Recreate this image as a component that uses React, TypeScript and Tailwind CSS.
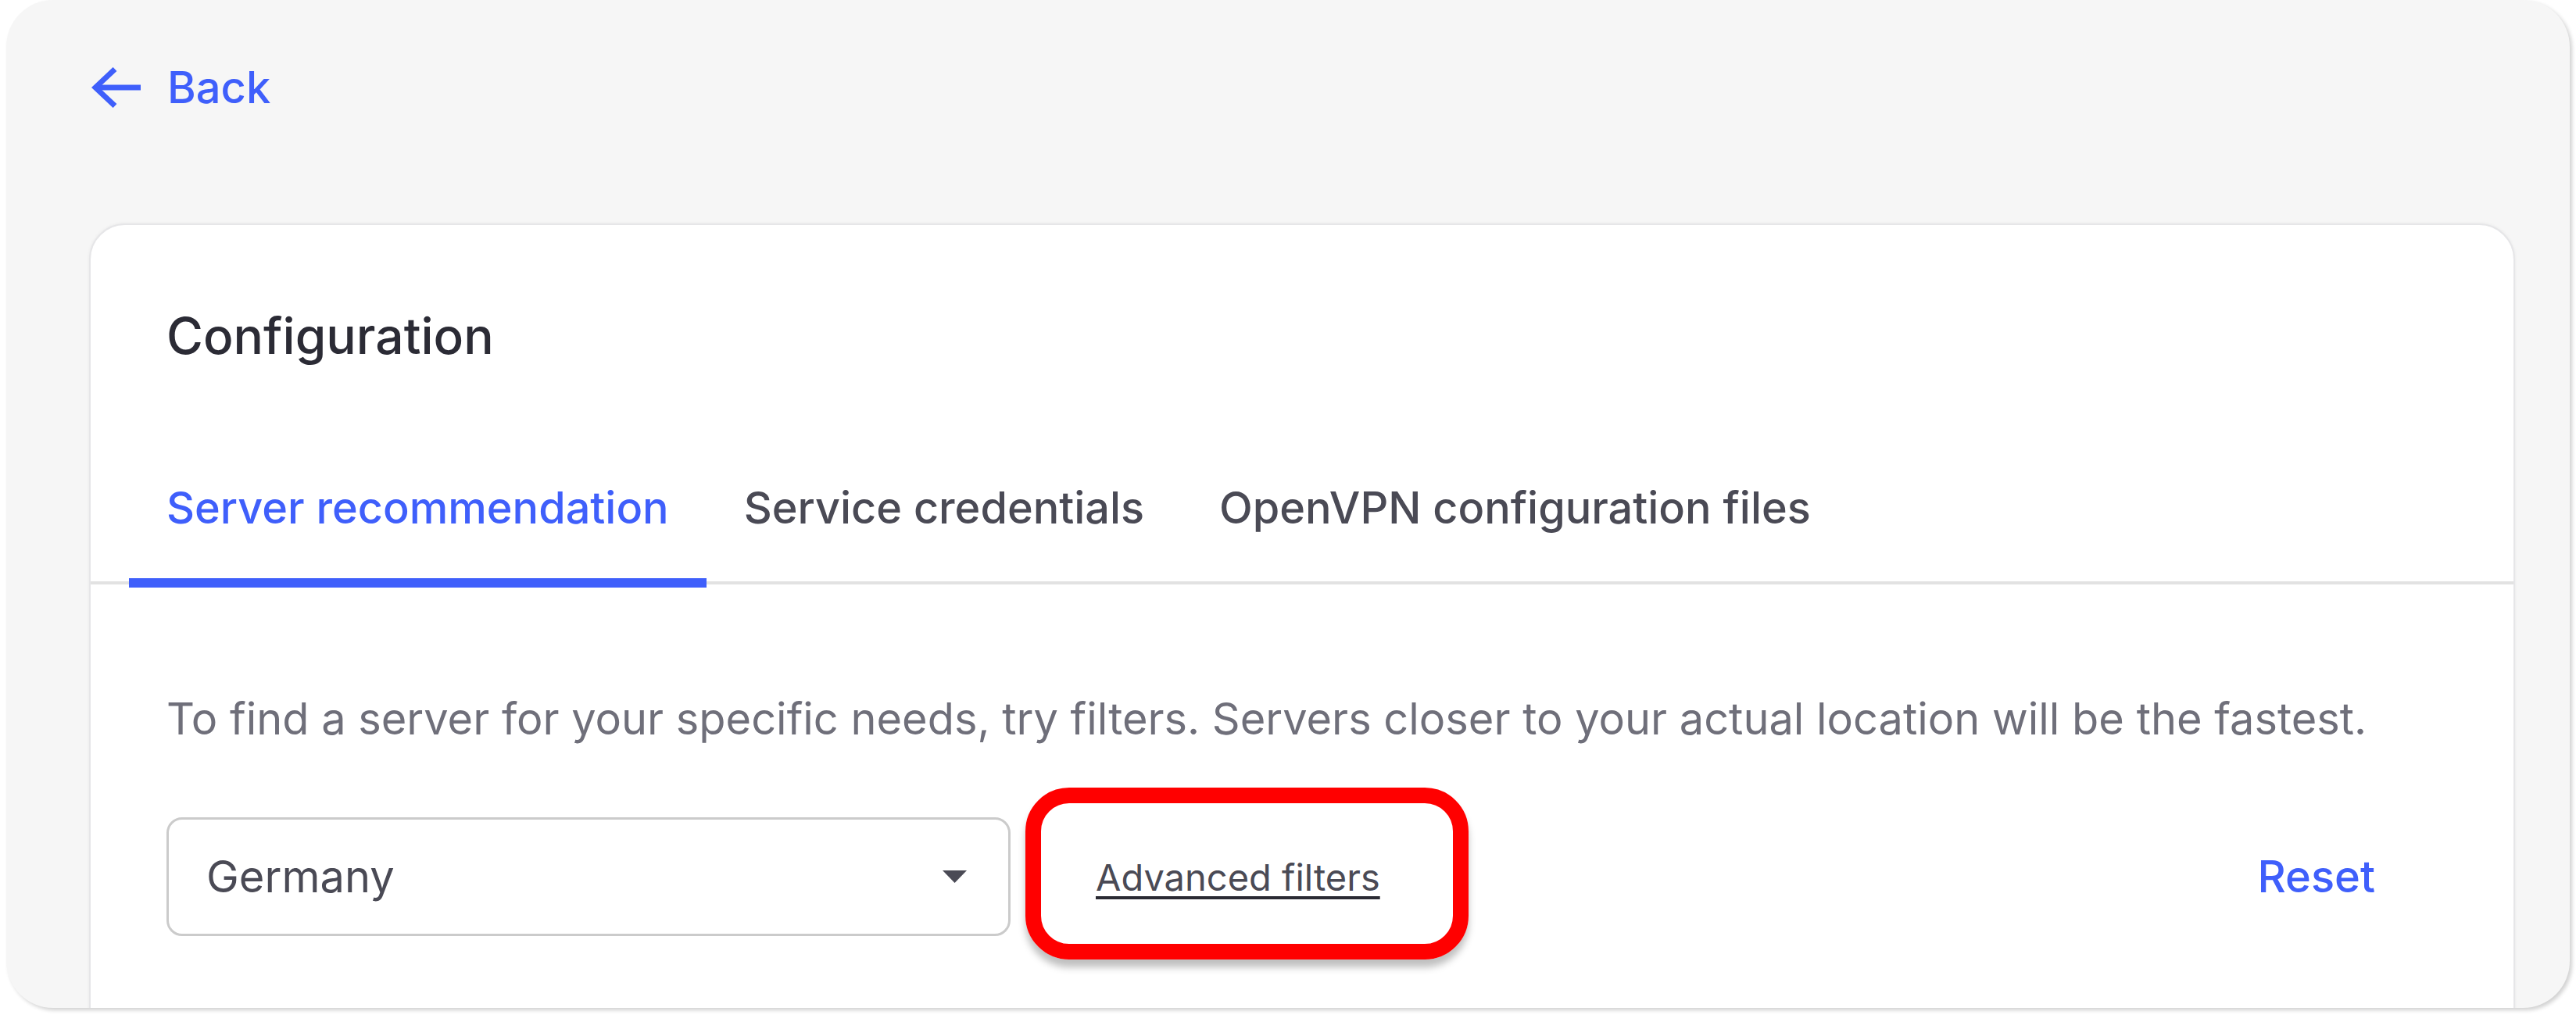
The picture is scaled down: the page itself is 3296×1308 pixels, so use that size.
const blue = 'text-[#3f5ffb]'

const BackArrow = () => (
    <svg width="64" height="52" viewBox="0 0 64 52" fill="none">
        <path d="M63 26H6" stroke="#3f5ffb" strokeWidth="7" />
        <path d="M30 2.5L5 26L30 49.5" stroke="#3f5ffb" strokeWidth="7" strokeLinejoin="miter" />
    </svg>
)

const Caret = () => (
    <svg width="31" height="16" viewBox="0 0 31 16">
        <path d="M0 0H31L15.5 16Z" fill="#4a4a55" />
    </svg>
)

const tabs = ['Server recommendation', 'Service credentials', 'OpenVPN configuration files']

export default function App() {
    return (
        <div className="w-[3296px] h-[1308px] bg-white font-['Inter',sans-serif]">
            <div className="ml-[8px] w-[3280px] h-[1290px] rounded-[60px] bg-[#f6f6f6] overflow-hidden shadow-[3px_3px_5px_rgba(0,0,0,0.18)]">
                <div className="pt-[84px] pl-[109px]">
                    <a className="flex items-center gap-[33px] h-[56px]">
                        <BackArrow />
                        <span className={`text-[56px] leading-[56px] font-medium ${blue}`}>Back</span>
                    </a>
                </div>

                <div className="mt-[146px] ml-[106px] w-[3104px] h-[1100px] rounded-[46px] bg-white border-2 border-[#e6e6e8] shadow-[0_0_4px_rgba(0,0,0,0.06)]">
                    <h1 className="pt-[110px] pl-[97px] text-[64px] leading-[64px] font-medium text-[#2b2b35]">
                        Configuration
                    </h1>

                    <div className="mt-[160px] flex pl-[49px] border-b-4 border-[#e2e2e2]">
                        {tabs.map((t, i) => (
                            <div key={t} className="relative px-[48px] pb-[66px]">
                                <span className={`text-[55.8px] leading-[56px] font-medium ${i === 0 ? blue : 'text-[#4a4a55]'}`}>{t}</span>
                                {i === 0 && <span className="absolute left-0 right-0 -bottom-[8px] h-[12px] bg-[#3f5ffb]" />}
                            </div>
                        ))}
                    </div>

                    <p className="mt-[144px] pl-[97px] text-[55.9px] leading-[56px] text-[#6f6f7a]">
                        To find a server for your specific needs, try filters. Servers closer to your actual location will be the fastest.
                    </p>

                    <div className="mt-[98px] pl-[97px] pr-[177px] flex items-center h-[152px]">
                        <div className="w-[1080px] h-[152px] border-[3px] border-[#cbcbcb] rounded-[20px] flex items-center justify-between pl-[48px] pr-[53px]">
                            <span className="text-[56px] leading-[56px] text-[#4a4a55]">Germany</span>
                            <Caret />
                        </div>

                        <div className="relative ml-[109px] h-[152px] flex items-center">
                            <a className="text-[47px] leading-[47px] text-[#4a4a55] underline decoration-[4px] decoration-[#2a2a33] underline-offset-[7px]">
                                Advanced filters
                            </a>
                            <div className="absolute -left-[90px] -top-[38px] w-[567px] h-[220px] border-[20px] border-[#ff0000] rounded-[56px] shadow-[0_10px_10px_rgba(0,0,0,0.25)]" />
                        </div>

                        <a className={`ml-auto text-[56px] leading-[56px] font-medium ${blue}`}>Reset</a>
                    </div>
                </div>
            </div>
        </div>
    )
}
